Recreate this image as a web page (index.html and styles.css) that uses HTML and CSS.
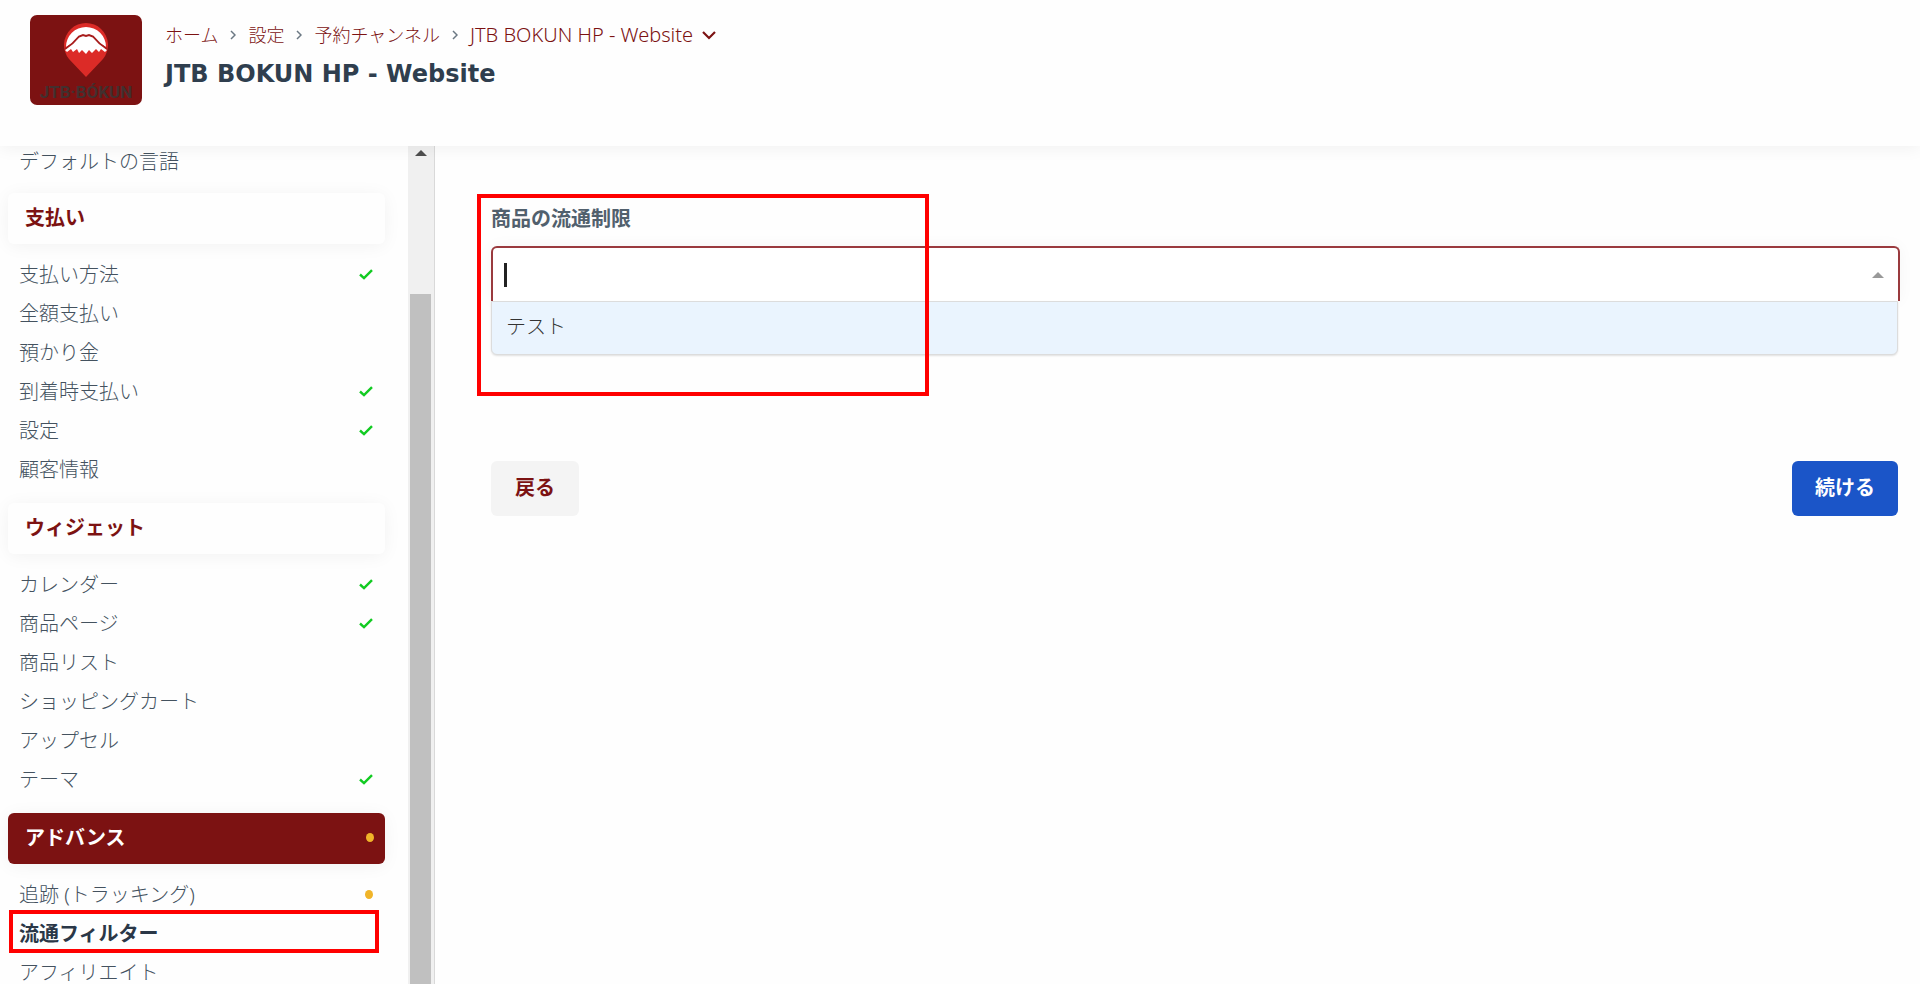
FILE: index.html
```html
<!DOCTYPE html>
<html lang="ja">
<head>
<meta charset="utf-8">
<title>JTB BOKUN HP - Website</title>
<link rel="stylesheet" href="styles.css">
</head>
<body>
<svg class="defs" aria-hidden="true"><symbol id="check" viewBox="0 0 14 11"><path d="M1 5.5 5 9.2 13 1.2" fill="none" stroke="#12cb22" stroke-width="2.4"/></symbol>
<symbol id="sep" viewBox="0 0 6 10"><path d="M1 1 5 5 1 9" fill="none" stroke="#6b7883" stroke-width="1.5"/></symbol></svg>
<header class="header">
  <svg class="logo" viewBox="0 0 112 90" role="img" aria-label="JTB BÓKUN">
    <rect width="112" height="90" rx="7" fill="#7c1212"/>
    <path d="M56 62 39 44A22 22 0 1 1 73 44Z" fill="#dc2b27"/>
    <path d="M36 32A20 20 0 1 1 76 32L66 26H46Z" fill="#fff"/>
    <path d="M35 35 49 21 53 19.500 56 21 59 19.500 63 21 77 35 75 37 71 34 69 37 66 34 62 38 59 35 56 39 52 35 49 38 47 34 43 37 41 34 37 37Z" fill="#fff"/>
    <path d="M35 34Q43 29 49 21.500L53 20 56 21 59 20 63 21.500Q69 29 77 34" fill="none" stroke="#a81d1c" stroke-width="2"/>
    <text class="logo-text" x="56" y="83" text-anchor="middle">JTB·BÓKUN</text>
  </svg>
  <div class="heading">
    <nav class="crumbs" aria-label="パンくず">
      <a href="#">ホーム</a><svg class="sep"><use href="#sep"/></svg>
      <a href="#">設定</a><svg class="sep"><use href="#sep"/></svg>
      <a href="#">予約チャンネル</a><svg class="sep"><use href="#sep"/></svg>
      <a href="#" class="current">JTB BOKUN HP - Website<svg class="chevron" viewBox="0 0 14 9"><path d="M1 1 7 7 13 1" fill="none" stroke="#7c1212" stroke-width="2.2"/></svg></a>
    </nav>
    <h1 class="title">JTB BOKUN HP - Website</h1>
  </div>
</header>
<div class="layout">
  <aside class="sidebar">
    <nav class="menu" aria-label="設定メニュー">
      <ul class="items scrolled"><li><a href="#">デフォルトの言語</a></li></ul>
      <h2 class="group"><a href="#">支払い</a></h2>
      <ul class="items">
        <li><a href="#">支払い方法<svg class="check"><use href="#check"/></svg></a></li>
        <li><a href="#">全額支払い</a></li>
        <li><a href="#">預かり金</a></li>
        <li><a href="#">到着時支払い<svg class="check"><use href="#check"/></svg></a></li>
        <li><a href="#">設定<svg class="check"><use href="#check"/></svg></a></li>
        <li><a href="#">顧客情報</a></li>
      </ul>
      <h2 class="group"><a href="#">ウィジェット</a></h2>
      <ul class="items">
        <li><a href="#">カレンダー<svg class="check"><use href="#check"/></svg></a></li>
        <li><a href="#">商品ページ<svg class="check"><use href="#check"/></svg></a></li>
        <li><a href="#">商品リスト</a></li>
        <li><a href="#">ショッピングカート</a></li>
        <li><a href="#">アップセル</a></li>
        <li><a href="#">テーマ<svg class="check"><use href="#check"/></svg></a></li>
      </ul>
      <h2 class="group open"><a href="#">アドバンス<span class="dot"></span></a></h2>
      <ul class="items">
        <li><a href="#">追跡 (トラッキング)<span class="dot"></span></a></li>
        <li class="selected"><a href="#" aria-current="page">流通フィルター</a></li>
        <li><a href="#">アフィリエイト</a></li>
      </ul>
    </nav>
    <div class="scrollbar"><span class="arrow-up"></span><span class="thumb"></span></div>
  </aside>
  <main class="main">
    <div class="field">
      <label class="label" for="filter">商品の流通制限</label>
      <div class="combo">
        <span class="caret"></span>
        <input class="combo-input" id="filter" type="text" role="combobox" aria-expanded="true" aria-controls="options" autocomplete="off">
        <span class="combo-arrow"></span>
      </div>
      <ul class="options" id="options" role="listbox"><li role="option" aria-selected="true">テスト</li></ul>
      <span class="highlight"></span>
    </div>
    <div class="actions">
      <button class="button back" type="button">戻る</button>
      <button class="button next" type="button">続ける</button>
    </div>
  </main>
</div>
</body>
</html>
```
FILE: styles.css
```css
* { box-sizing: border-box; }
body {
  margin: 0;
  height: 100vh;
  display: flex;
  flex-direction: column;
  overflow: hidden;
  background: #fefefe;
  color: #44525f;
  font: 300 20px/39px "Noto Sans", "Noto Sans CJK JP", sans-serif;
}
a { color: inherit; text-decoration: none; }
ul { list-style: none; margin: 0; padding: 0; }
.defs { position: absolute; width: 0; height: 0; }

.header {
  display: flex;
  gap: 23px;
  flex: none;
  min-height: 146px;
  padding: 15px 30px;
  background: #fefefe;
  box-shadow: 0 2px 16px rgba(0, 0, 0, .06);
  z-index: 1;
}
.logo { width: 112px; height: 90px; flex: none; }
.logo-text { font: 700 17px "Roboto", sans-serif; fill: #42302f; }
.crumbs {
  display: flex;
  align-items: center;
  gap: 12px;
  color: #7c1212;
  font-size: 18px;
  line-height: 40px;
}
.sep { width: 6px; height: 10px; }
.current { display: flex; align-items: center; gap: 9px; font-size: 20px; }
.chevron { width: 14px; height: 9px; }
.title { margin: 0; font-family: "DejaVu Sans", sans-serif; font-size: 24px; line-height: 38px; font-weight: 700; color: #2f3e4e; }

.layout { display: flex; flex: 1; min-height: 0; }
.sidebar {
  display: flex;
  flex: none;
  width: 435px;
  overflow: hidden;
  border-right: 1px solid #d9d9d9;
}
.menu { flex: 1; padding: 0 23px 0 8px; }
.scrolled { margin: -4px 0 -2px; }
.items a { display: flex; align-items: center; justify-content: space-between; padding: 0 12px 0 11px; }
.group {
  margin: 14px 0 11px;
  border-radius: 6px;
  font-size: 20px;
  font-weight: 700;
  line-height: 49px;
  color: #7c1212;
  box-shadow: 0 2px 18px rgba(0, 0, 0, .05);
}
.group a { display: flex; align-items: center; justify-content: space-between; padding: 0 11px 2px 17px; }
.open { background: #7c1212; color: #fff; }
.check { width: 14px; height: 11px; }
.dot { width: 8px; height: 9px; border-radius: 50%; background: #f0b429; }
.selected { position: relative; font-weight: 700; color: #2a3747; }
.selected::after {
  content: "";
  position: absolute;
  inset: -4px 6px 0 1px;
  border: 4px solid #f00;
  pointer-events: none;
}
.scrollbar {
  display: flex;
  flex-direction: column;
  align-items: center;
  width: 26px;
  padding-right: 1px;
  background: #f0f0f0;
}
.arrow-up {
  margin: 4px 0 138px;
  border: 6px solid transparent;
  border-top: 0;
  border-bottom-color: #4d4d4d;
}
.thumb { flex: 1; width: 21px; background: #c0c0c0; }

.main { flex: 1; padding: 53px 22px 0 56px; }
.field { position: relative; }
.label { display: block; font-weight: 700; color: #51606d; padding-bottom: 8px; }
.combo {
  display: flex;
  align-items: center;
  height: 55px;
  margin-right: -2px;
  padding: 0 14px 0 11px;
  border: 2px solid #9a3a3e;
  border-bottom: 0;
  border-radius: 6px 6px 0 0;
  box-shadow: 0 0 16px rgba(0, 0, 0, .04);
  background: #fff;
}
.caret { width: 3px; height: 24px; background: #222; }
.combo-input { flex: 1; min-width: 0; border: 0; outline: 0; background: none; font: inherit; }
.combo-arrow { border: 6px solid transparent; border-top: 0; border-bottom-color: #999; }
.options {
  border: 1px solid #dcdcdc;
  border-radius: 0 0 6px 6px;
  background: #eaf4fe;
  box-shadow: 0 1px 2px rgba(0, 0, 0, .12);
  color: #333;
}
.options li { padding: 5px 14px 8px; }
.highlight {
  position: absolute;
  top: -5px;
  left: -14px;
  width: 452px;
  height: 202px;
  border: 4px solid #f00;
  pointer-events: none;
}
.actions { display: flex; justify-content: space-between; padding-top: 106px; }
.button { border: 0; border-radius: 6px; padding: 7px 23px 9px; font: inherit; font-weight: 700; }
.back { padding-inline: 24px; background: #f4f4f4; color: #7c1212; }
.next { background: #1b55c8; color: #fff; }
```
